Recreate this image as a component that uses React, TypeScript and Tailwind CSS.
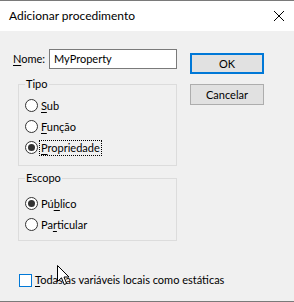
import React from "react";

const font = { fontFamily: 'Lato, "Noto Sans", "Liberation Sans", sans-serif' };

function Radio({ checked, children, focus }: { checked?: boolean; children: React.ReactNode; focus?: boolean }) {
  return (
    <div className="flex items-center h-[21px]">
      <span className="w-[13px] h-[13px] rounded-full border border-[#333333] bg-white flex items-center justify-center shrink-0">
        {checked && <span className="w-[7px] h-[7px] rounded-full bg-[#333333]" />}
      </span>
      <span
        className={
          "ml-[2px] px-[1px] leading-[14px] " +
          (focus ? "outline outline-1 outline-dotted outline-black" : "")
        }
      >
        {children}
      </span>
    </div>
  );
}

function Group({ label, className, children }: { label: string; className: string; children: React.ReactNode }) {
  return (
    <div className={"relative border border-[#dcdcdc] ml-[5px] w-[159px] " + className}>
      <span className="absolute left-[6px] top-[-8px] px-[1px] leading-[14px] bg-[#f0f0f0]">{label}</span>
      {children}
    </div>
  );
}

export default function App() {
  return (
    <div
      className="relative w-[294px] h-[302px] flex flex-col border-y border-[#7a7a7a] text-[11px] text-black"
      style={font}
    >
      {/* TITLE BAR */}
      <div className="h-[30px] bg-white flex items-center justify-between pl-[9px] pr-[10px] shrink-0">
        <span className="text-[12px] leading-[16px]">Adicionar procedimento</span>
        <svg width="10" height="10" viewBox="0 0 10 10">
          <path d="M0 0 L10 10 M10 0 L0 10" stroke="#000" strokeWidth="1" />
        </svg>
      </div>

      {/* BODY */}
      <div className="flex-1 bg-[#f0f0f0] pt-[18px]">
        <div className="flex">
          <div className="flex flex-col ml-[13px] w-[164px]">
            <div className="flex items-center h-[20px]">
              <span className="w-[36px] leading-[14px]">
                <span className="underline underline-offset-2">N</span>ome:
              </span>
              <div className="w-[128px] h-[20px] border border-[#7a7a7a] bg-white flex items-center px-[4px] leading-[14px]">
                MyProperty
              </div>
            </div>

            <Group label="Tipo" className="mt-[15px] h-[82px] pt-[10px] pl-[6px]">
              <Radio>
                <span className="underline underline-offset-2">S</span>ub
              </Radio>
              <Radio>
                <span className="underline underline-offset-2">F</span>unção
              </Radio>
              <Radio checked focus>
                <span className="underline underline-offset-2">P</span>ropriedade
              </Radio>
            </Group>

            <Group label="Escopo" className="mt-[12px] h-[63px] pt-[14px] pl-[6px]">
              <Radio checked>
                Pú<span className="underline underline-offset-2">b</span>lico
              </Radio>
              <Radio>
                Pa<span className="underline underline-offset-2">r</span>ticular
              </Radio>
            </Group>
          </div>

          <div className="flex flex-col ml-[13px] mt-[4px] gap-[10px]">
            <button className="w-[74px] h-[21px] border-2 border-[#0078d7] bg-[#e1e1e1] leading-[14px]">OK</button>
            <button className="w-[74px] h-[21px] border border-[#adadad] bg-[#e1e1e1] leading-[14px]">Cancelar</button>
          </div>
        </div>

        <div className="flex items-center ml-[19px] mt-[32px] h-[14px]">
          <span className="w-[13px] h-[13px] border border-[#0078d7] bg-white shrink-0" />
          <span className="ml-[3px] leading-[14px]">
            <span className="underline underline-offset-2">T</span>odas as variáveis locais como estáticas
          </span>
        </div>
      </div>

      {/* MOUSE CURSOR */}
      <svg className="absolute left-[57px] top-[264px]" width="13" height="21" viewBox="0 0 13 21">
        <path
          d="M0.5 0.5 L0.5 16.5 L4.5 12.8 L7.2 19.5 L9.6 18.5 L7 12 L12 12 Z"
          fill="#fff"
          stroke="#000"
          strokeWidth="1"
          strokeLinejoin="miter"
        />
      </svg>
    </div>
  );
}
